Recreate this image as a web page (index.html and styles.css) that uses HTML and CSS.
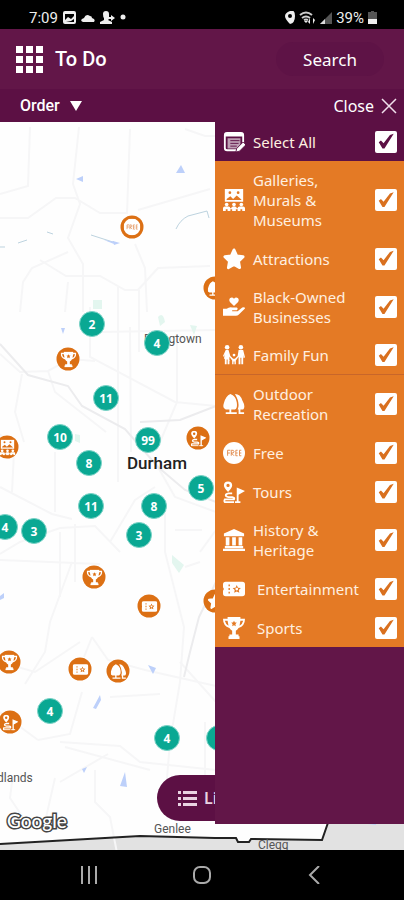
FILE: index.html
```html
<!DOCTYPE html>
<html lang="en">
<head>
    <meta charset="UTF-8">
    <meta name="viewport" content="width=device-width, initial-scale=1.0">
    <title>To Do</title>
    <link rel="stylesheet" href="styles.css">
</head>
<body>
    <svg class="sprite" aria-hidden="true">
        <symbol id="select" viewBox="0 0 24 24">
            <path fill="none" stroke="currentColor" stroke-width="2" d="M15 21H4.500Q2 21 2 18.500V4.500Q2 2 4.500 2H19.500Q22 2 22 4.500V14"/>
            <path fill="currentColor" d="M2 2h20v4H2z"/>
            <path fill="currentColor" opacity=".6" d="M5 8h14v7l-4 4H5z"/>
            <path stroke="#5e1147" stroke-width="1" d="M8 10.500h10M8 13.500h9M8 16.500h7"/>
            <path fill="currentColor" stroke="#5e1147" stroke-width="1" d="M14 23l1-4 7-7 3 3-7 7z"/>
        </symbol>
        <symbol id="gallery" viewBox="0 0 24 24">
            <path fill="currentColor" fill-rule="evenodd" d="M2 0h20v14H2zM4 11l4-3 3 3 4-4 5 4.500v.500H4zM6 4a1.500 1.500 0 1 0 3 0a1.500 1.500 0 1 0-3 0M15 4a1.500 1.500 0 1 0 3 0a1.500 1.500 0 1 0-3 0"/>
            <circle fill="currentColor" cx="4" cy="17" r="2"/><circle fill="currentColor" cx="12" cy="17" r="2"/><circle fill="currentColor" cx="20" cy="17" r="2"/>
            <path fill="currentColor" d="M0 24v-3q0-2 2-2h4q2 0 2 2h1q0-2 2-2h2q2 0 2 2h1q0-2 2-2h4q2 0 2 2v3h-3v-2h-2v2h-3v-2h-2v2h-4v-2H8v2H5v-2H3v2z"/>
        </symbol>
        <symbol id="star" viewBox="0 0 24 24">
            <path fill="currentColor" stroke="currentColor" stroke-width="3" stroke-linejoin="round" d="M12 2l3 6.500 7 1-5 5 1.200 7L12 18l-6.200 3.500L7 14.500l-5-5 7-1z"/>
        </symbol>
        <symbol id="hand" viewBox="0 0 24 24">
            <path fill="currentColor" d="M12 11L7.500 6.500Q6 4.500 7.500 2.500Q10 .500 12 3Q14 .500 16.500 2.500Q18 4.500 16.500 6.500zM0 14h4q3-2.500 6-1.500h5q2 1 0 3h-5v1h6l5-4q3-1 3 1l-7 7q-1 1-3 1H0z"/>
        </symbol>
        <symbol id="family" viewBox="0 0 24 24">
            <circle fill="currentColor" cx="4.500" cy="3.500" r="2.500"/><circle fill="currentColor" cx="19.500" cy="3.500" r="2.500"/><circle fill="currentColor" cx="12" cy="12" r="1.500"/>
            <path fill="currentColor" d="M3 6.500h3l2 6.500 3 3h2l3-3 1-6.500h5l2 8-1.500 1L22 12v10h-2v-7h-1v7h-2v-8l-3 4v4h-1.500v-3h-1v3H10v-4l-3-4v4h1l-1 .500V22H5v-5H4v5H2v-6H1l1-5-1 3-1-1z"/>
        </symbol>
        <symbol id="trees" viewBox="0 0 24 24">
            <path fill="currentColor" d="M8 1q6 2 7 9 1 7-2 8H9v3h6v2H3v-2h4v-3H3q-4-1-2-7Q3 3 8 1zM13 1q6 0 8 7 4 7 1 10h-3v3h4v2h-6v-5h-1q3-7-3-17z"/>
        </symbol>
        <symbol id="free" viewBox="0 0 24 24">
            <circle fill="currentColor" cx="12" cy="12" r="12"/>
            <path class="cut" d="M5 15V9h3M5 12h2.500M9 15V9q3-.500 3 1.500T9 12l3 3M16 9h-2v6h2M14 12h2M20 9h-2v6h2M18 12h2"/>
        </symbol>
        <symbol id="tours" viewBox="0 0 24 24">
            <path fill="currentColor" fill-rule="evenodd" d="M5.500 12Q1 7 1 4.800Q1 .500 5.500 .500T10 4.800Q10 7 5.500 12zM3.700 4.800a1.800 1.800 0 1 0 3.600 0a1.800 1.800 0 1 0-3.600 0M15 7l9 4-7 4v9h-2z"/>
            <path fill="none" stroke="currentColor" stroke-width="2" d="M10 13.500H6Q3 14 3 15.500t3 2h4q3 .500 2 2.500H2q-1 2 0 3h10M13 23h6"/>
        </symbol>
        <symbol id="museum" viewBox="0 0 24 24">
            <path fill="currentColor" d="M12 0l11 5v3H1V5zM3 9h4v9H3zM10 9h4v9h-4zM17 9h4v9h-4zM2 18.500h20V21H2zM0 21.500h24V24H0z"/>
        </symbol>
        <symbol id="ticket" viewBox="0 0 24 24">
            <path fill="currentColor" fill-rule="evenodd" d="M3 4h18q3 0 3 3v10q0 3-3 3H3q-3 0-3-3v-3q2-2 0-4V7q0-3 3-3zM6 7v2h1.500V7zM6 11v2h1.500v-2zM6 15v2h1.500v-2zM15 7.500l-1.300 3-3.200.300 2.300 2.200-.600 3.200 2.800-1.600 2.800 1.600-.600-3.200 2.300-2.200-3.200-.300z"/>
            <circle fill="currentColor" cx="15" cy="12" r="1.500"/>
        </symbol>
        <symbol id="trophy" viewBox="0 0 24 24">
            <path fill="currentColor" fill-rule="evenodd" d="M5 0h14v2h5q0 8-7 10-1 2-3 3v4h3v2h1v3H6v-3h1v-2h3v-4q-2-1-3-3Q0 10 0 2h5zM2 4q1 4 4 5.500L5 4zM22 4h-3l-1 5.500Q21 8 22 4zM12 4l-1 2H9l1.500 1.800L10 10l2-1 2 1-.500-2.200L15 6h-2z"/>
        </symbol>
    </svg>

    <div class="status">
        <div class="status-group">
            <span>7:09</span>
            <svg width="13" height="13" viewBox="0 0 13 13"><path fill="#eee" fill-rule="evenodd" d="M2 0h9q2 0 2 2v9q0 2-2 2H2q-2 0-2-2V2q0-2 2-2zM2 3v6l3-3 3 2 3-3V3zM3 11h8V8L8 10z"/></svg>
            <svg width="14" height="13" viewBox="0 0 14 13"><path fill="#eee" d="M2 11q-3-1-1-3l2-1q2-5 6-2 2 0 2 2 4 1 2 4z"/></svg>
            <svg width="15" height="13" viewBox="0 0 15 13"><path fill="#eee" d="M3 3q0-3 3-3t3 3v3h2V4l4 3-4 3V8H9l-1 1 4 2v2H0v-2l4-2V7Q3 6 3 3z"/></svg>
            <svg width="6" height="13" viewBox="0 0 6 13"><circle fill="#eee" cx="3" cy="6" r="2.500"/></svg>
        </div>
        <div class="status-group status-right">
            <svg width="10" height="13" viewBox="0 0 10 13"><path fill="#eee" fill-rule="evenodd" d="M5 13Q0 8 0 5t5-5 5 5-5 8zM3 5a2 2 0 1 0 4 0a2 2 0 1 0-4 0"/></svg>
            <svg width="17" height="13" viewBox="0 0 17 13"><path fill="none" stroke="#ccc" stroke-width="2" d="M1 4q6-5 12 0M3 7q4-3 8 0M5 9q2-1 4 0"/><path fill="#eee" d="M5 10l2 2 2-2zM11 7v6l-2-2zM14 13V7l2 2z"/></svg>
            <svg width="12" height="13" viewBox="0 0 12 13"><path fill="#555" d="M12 1v12H0z"/><path fill="#ddd" d="M5 8v5H0z"/></svg>
            <span>39%</span>
            <svg width="9" height="13" viewBox="0 0 9 13"><path fill="#555" d="M3 0h3v1h3v12H0V1h3z"/><path fill="#eee" d="M0 8h9v5H0z"/></svg>
        </div>
    </div>

    <header class="header">
        <button class="menu" aria-label="Menu">
            <svg width="27" height="27" viewBox="0 0 27 27"><path fill="#fff" d="M0 0h7v7H0zM10 0h7v7h-7zM20 0h7v7h-7zM0 10h7v7H0zM10 10h7v7h-7zM20 10h7v7h-7zM0 20h7v7H0zM10 20h7v7h-7zM20 20h7v7h-7z"/></svg>
        </button>
        <h1>To Do</h1>
        <button class="search">Search</button>
    </header>
    <div class="toolbar">
        <button class="order">Order <svg width="12" height="10" viewBox="0 0 12 10"><path fill="#fff" d="M0 0h12L6 10z"/></svg></button>
        <button class="close">Close <svg width="16" height="16" viewBox="0 0 16 16"><path stroke="#f0dfeb" stroke-width="1.500" d="M1 1l14 14M15 1L1 15"/></svg></button>
    </div>

    <main class="map" id="map">
        <svg class="roads" viewBox="0 0 404 728" preserveAspectRatio="xMinYMin slice" aria-hidden="true">
            <path fill="#e2e2e2" d="M0 722L140 714 215 716H236L238 720H249L251 717 322 718 330 690H404V728H0z"/>
            <g fill="none" stroke="#f6f6f7" stroke-width="2">
                <path d="M79 5L73 62 80 82 68 116 83 142V190M130 7L127 92M30 5L28 64 0 72M0 96H28L56 76H75L100 91H127M138 88L210 67M185 7l20 7h11M135 122L145 146 147 190"/>
                <path d="M20 190L23 160 32 146 68 130M40 138L66 154H100L125 168H138L158 146 210 144M68 160L65 190M139 168V230"/>
                <path d="M90 185V235L175 280 216 284M0 232L20 250 48 249 70 237 95 239M22 252L15 290 24 320M130 205L131 330M177 220V280L160 320M48 249L55 270 106 310M100 210L216 208M118 165V360"/>
                <path d="M0 312L14 330 12 370M0 365L52 392 72 397M55 330V390M60 410V475M75 402V460M0 432L20 420 60 406 95 404 120 430M0 438L100 442M72 440L50 500 45 530 25 562M110 420L135 378 155 365"/>
                <path d="M155 340L175 375 216 390M165 385V430L184 505 180 560 170 620 165 680M200 430L216 408M92 515L108 538 145 548 216 564M175 408H202M185 445L200 440M92 515L84 535"/>
                <path d="M0 590L38 618M0 540L35 550 80 520M60 620L120 624 140 640 216 648M65 625L150 648M38 618L70 612 82 570M12 660L10 676 26 700M55 656L45 700M95 648V680L110 695 118 736M110 575L160 572M180 540L216 580M205 600V690M60 660L108 632"/>
            </g>
            <path fill="none" stroke="#ececee" stroke-width="2" d="M0 222L28 253 68 264 82 284 125 307 138 322 158 345 185 368 216 380M140 300L180 298 216 284M216 460L199 495 190 530 184 555"/>
            <path fill="none" stroke="#bdd3df" d="M91 113L116 121M176 107Q180 98 188 94L207 89 209 96M0 125h5M18 121l9-3M47 110l6 2"/>
            <g fill="#bdd0fa">
                <path d="M76 57l7-3v6zM176 51l5-8 4 8zM104 118l12 2-2 2zM113 119l7 2-6 2zM61 206h4l-2 6zM0 474l4-3v5l-4 2zM148 543l8 3-3 6zM100 573l1 5-5 9-3-1zM82 647l5-2-3 6zM120 664l5-14 2 15zM208 690h6l-2 8zM332 690h4l3 9-6-2zM368 690h10l-2 13-8-1z"/>
            </g>
            <g fill="#e3f6ef"><path d="M93 178h9v9h-9zM158 195q5-6 7 5l-5 4zM190 203l7 1-3 9zM75 312l5 1v8l-5-2zM172 433l12 10-5 8-7-10z"/></g>
            <path fill="none" stroke="#222" stroke-width="2" d="M0 722L140 714 215 716H236L238 720H249L251 717 322 718 330 695"/>
        </svg>
        <span class="place braggtown">Braggtown</span>
        <span class="place city">Durham</span>
        <span class="place woodlands">dlands</span>
        <span class="place genlee">Genlee</span>
        <span class="place clegg">Clegg</span>
        <span class="google">Google</span>

        <button class="list">
            <svg width="19" height="15" viewBox="0 0 19 15"><path fill="#e9d3e2" d="M0 0h3v3H0zM5 0h14v3H5zM0 6h3v3H0zM5 6h14v3H5zM0 12h3v3H0zM5 12h14v3H5z"/></svg>
            List
        </button>

        <form class="filters">
            <label class="filter all"><svg class="icon"><use href="#select"/></svg><span>Select All</span><input type="checkbox" checked></label>
            <label class="filter"><svg class="icon"><use href="#gallery"/></svg><span>Galleries, Murals &amp; Museums</span><input type="checkbox" checked></label>
            <label class="filter"><svg class="icon"><use href="#star"/></svg><span>Attractions</span><input type="checkbox" checked></label>
            <label class="filter"><svg class="icon"><use href="#hand"/></svg><span>Black-Owned Businesses</span><input type="checkbox" checked></label>
            <label class="filter divider"><svg class="icon"><use href="#family"/></svg><span>Family Fun</span><input type="checkbox" checked></label>
            <label class="filter"><svg class="icon"><use href="#trees"/></svg><span>Outdoor Recreation</span><input type="checkbox" checked></label>
            <label class="filter"><svg class="icon"><use href="#free"/></svg><span>Free</span><input type="checkbox" checked></label>
            <label class="filter"><svg class="icon"><use href="#tours"/></svg><span>Tours</span><input type="checkbox" checked></label>
            <label class="filter"><svg class="icon"><use href="#museum"/></svg><span>History &amp; Heritage</span><input type="checkbox" checked></label>
            <label class="filter wide"><svg class="icon"><use href="#ticket"/></svg><span>Entertainment</span><input type="checkbox" checked></label>
            <label class="filter wide"><svg class="icon"><use href="#trophy"/></svg><span>Sports</span><input type="checkbox" checked></label>
        </form>
    </main>

    <nav class="navbar">
        <button aria-label="Recent apps"><svg width="18" height="18" viewBox="0 0 18 18"><path stroke="#aaa" stroke-width="2" d="M2 0v18M9 0v18M16 0v18"/></svg></button>
        <button aria-label="Home"><svg width="18" height="18" viewBox="0 0 18 18"><rect x="1" y="1" width="16" height="16" rx="6" fill="none" stroke="#aaa" stroke-width="2"/></svg></button>
        <button aria-label="Back"><svg width="18" height="18" viewBox="0 0 18 18"><path fill="none" stroke="#aaa" stroke-width="2" d="M13 0L4 9l9 9"/></svg></button>
    </nav>

    <script>
        // x, y are the centre of each marker on the map
        const clusters = [
            [92, 202, 2], [157, 221, 4], [106, 276, 11], [60, 315, 10], [148, 318, 99],
            [89, 341, 8], [201, 366, 5], [91, 384, 11], [154, 384, 8], [5, 405, 4],
            [34, 409, 3], [139, 413, 3], [50, 589, 4], [167, 616, 4], [219, 616, 6]
        ];
        const pins = [
            [132, 105, 'free'], [215, 166, 'trees'], [68, 237, 'trophy'], [7, 325, 'gallery'],
            [198, 316, 'tours'], [94, 455, 'trophy'], [149, 484, 'ticket'], [215, 479, 'star'],
            [9, 540, 'trophy'], [80, 547, 'ticket'], [118, 549, 'trees'], [10, 600, 'tours']
        ];
        const map = document.getElementById('map');

        function addMarker(x, y, className, content) {
            const marker = document.createElement('button');
            marker.className = 'marker ' + className;
            marker.style.left = x + 'px';
            marker.style.top = y + 'px';
            marker.innerHTML = content;
            map.appendChild(marker);
            return marker;
        }

        clusters.forEach(([x, y, count]) => addMarker(x, y, 'cluster', count));
        pins.forEach(([x, y, icon]) => {
            const pin = addMarker(x, y, 'pin pin-' + icon, `<svg class="pin-icon"><use href="#${icon}"/></svg>`);
            pin.setAttribute('aria-label', icon);
        });
    </script>
</body>
</html>
```
FILE: styles.css
```css
* { box-sizing: border-box; }
body { margin: 0; min-height: 100vh; display: flex; flex-direction: column; background-color: #621648; color: white; font-family: "Noto Sans", "Open Sans", sans-serif; }
button { border: 0; padding: 0; margin: 0; background: none; color: inherit; font: inherit; cursor: pointer; }
svg { display: block; flex: none; }
.sprite { position: absolute; width: 0; height: 0; }

.status { height: 29px; padding: 6px 27px 0 29px; background-color: black; display: flex; justify-content: space-between; color: #eee; font: 400 15px/24px Roboto, sans-serif; }
.status-group { display: flex; align-items: center; gap: 5px; }
.status-right { gap: 4px; }

.header { height: 60px; padding: 0 20px 0 16px; display: flex; align-items: center; gap: 12px; }
.header h1 { margin: 0; flex: 1; font: 500 20px/24px Roboto, sans-serif; }
.search { width: 108px; height: 34px; border-radius: 17px; background-color: #5e1346; font-size: 17px; }
.toolbar { height: 33px; padding: 0 7px 0 20px; display: flex; align-items: center; justify-content: space-between; background-color: #5c1044; font-size: 16px; }
.order, .close { display: flex; align-items: center; gap: 7px; }
.order { gap: 10px; font-family: Roboto, sans-serif; font-weight: 500; }

.map { flex: 1; position: relative; overflow: hidden; background-color: #fefefe; }
.roads { position: absolute; top: 0; left: 0; width: 100%; height: 100%; }
.place { position: absolute; color: #555; font: 12px/14px Roboto, sans-serif; }
.braggtown { left: 144px; top: 210px; }
.city { left: 127px; top: 331px; color: #222; font-size: 17px; line-height: 20px; font-weight: 500; }
.woodlands { left: -3px; top: 649px; }
.genlee { left: 154px; top: 700px; }
.clegg { left: 258px; top: 716px; }
.google { position: absolute; left: 7px; bottom: 17px; color: white; font: 500 19px/24px Lato, sans-serif; -webkit-text-stroke: 3px #444; paint-order: stroke fill; }

.marker { position: absolute; transform: translate(-50%, -50%); border-radius: 50%; display: flex; align-items: center; justify-content: center; }
.cluster { width: 26px; height: 26px; background-color: #0aa893; border: 1px solid #7bd3c7; font-size: 12px; font-weight: bold; }
.pin { width: 23px; height: 23px; background-color: #dc7014; }
.pin-icon { width: 16px; height: 16px; }
.pin-free .pin-icon { width: 17px; height: 17px; }
.cut { fill: none; stroke: #e08a4c; stroke-width: 1; }

.list { position: absolute; left: 157px; bottom: 29px; width: 110px; height: 46px; padding-left: 21px; border-radius: 23px; background-color: #5c1044; display: flex; align-items: center; gap: 7px; color: #e9d3e2; font-size: 16px; font-weight: 600; }

.filters { position: absolute; z-index: 1; top: 0; right: 0; bottom: 26px; width: 189px; background-color: #621648; }
.filter { min-height: 39px; padding: 9px 7px 9px 8px; display: flex; align-items: center; gap: 8px; background-color: #e47a25; color: #fff0e0; font-size: 15px; line-height: 20px; }
.filter span { flex: 1; padding-right: 16px; }
.filter.wide span { padding: 0 0 0 4px; }
.all { background-color: #5c1044; }
.divider { border-bottom: 1px solid #c8662a; }
.icon { width: 22px; height: 22px; margin: -1px 0; color: white; }
.filter input { appearance: none; flex: none; width: 22px; height: 22px; margin: -1px 0; border-radius: 2px; background-color: white; color: #d9701f; }
.all input { color: #5c1044; }
.filter input:checked::before { content: ""; display: block; width: 22px; height: 22px; background-color: currentColor; clip-path: polygon(17% 53%, 27% 45%, 39% 58%, 68% 20%, 85% 15%, 43% 82%, 34% 82%); }

.navbar { height: 50px; background-color: black; display: flex; align-items: center; justify-content: center; gap: 95px; }
```
